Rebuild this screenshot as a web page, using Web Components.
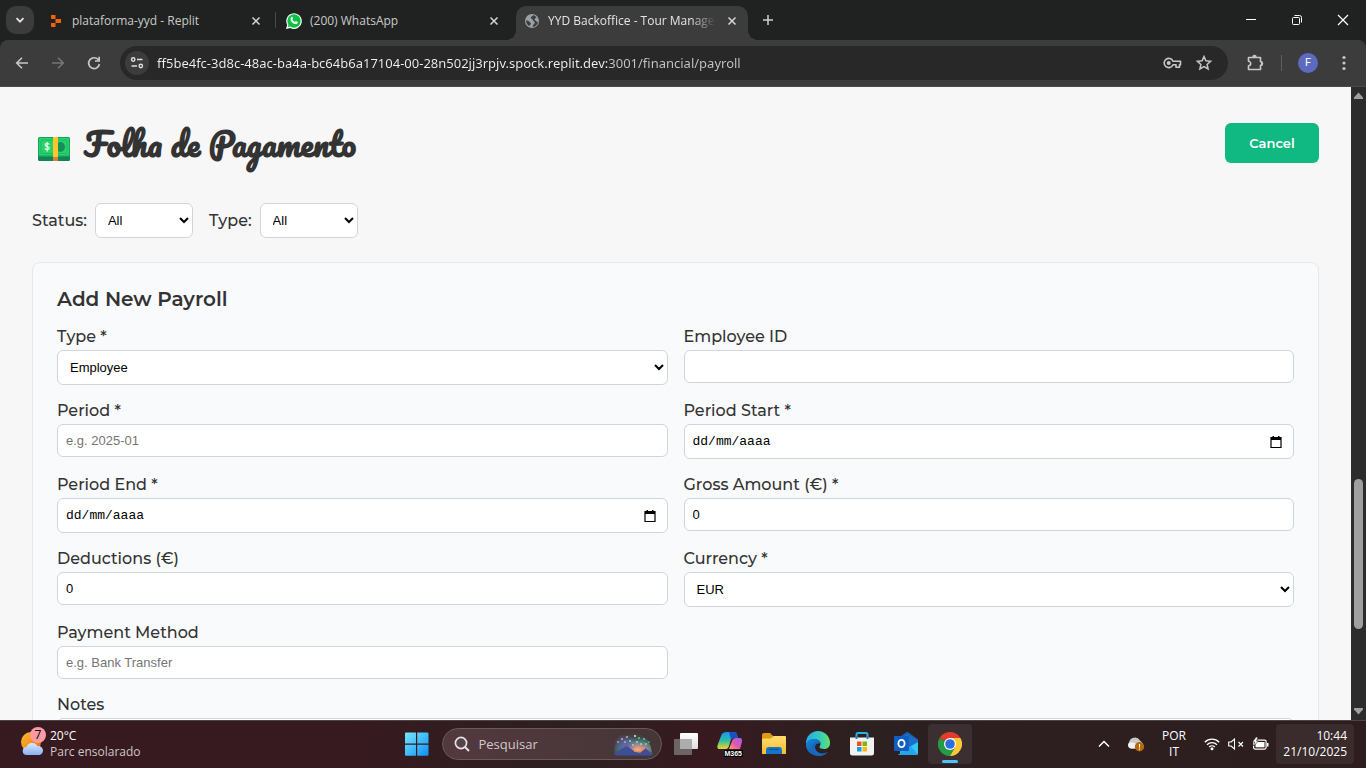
<!DOCTYPE html>
<html lang="pt">
<head>
<meta charset="utf-8">
<title>YYD Backoffice - Tour Management</title>
<style>
  :root {
    --ui-font: "Segoe UI", "Open Sans", sans-serif;
    --url-font: "Segoe UI", "Noto Sans", sans-serif;
    --page-font: Montserrat, Inter, sans-serif;
    --control-font: Arial, "Liberation Sans", sans-serif;
    --ink: #333333;
    --line: #d1d5db;
    --chrome: #3c3c3c;
  }
  html, body { margin: 0; height: 100%; overflow: hidden; }
</style>
</head>
<body>
<desktop-screen></desktop-screen>

<script>
const ICONS = {
  chevronDown: [14, 14, '<path d="M3.500 5.200 7 8.700l3.500-3.500" fill="none" stroke="#e3e3e3" stroke-width="1.800"/>'],
  chevronUp: [14, 14, '<path d="M2 9.500 7 4.500l5 5" fill="none" stroke="#fff" stroke-width="1.500"/>'],
  replit: [14, 14, '<g fill="#f26207"><path d="M2 1h4.500v4H2.500A1 1 0 0 1 2 4zM6.500 5H12v4H6.500zM2 9h4.500v4H2.500A1 1 0 0 1 2 12z"/></g>'],
  whatsapp: [16, 16, '<path d="M0 16l1.200-4.100A7.800 7.800 0 1 1 4.200 14.900z" fill="#fff"/><circle cx="8" cy="8" r="6.700" fill="#0cc143"/><path d="M1.700 14.300l1-3 2 2z" fill="#0cc143"/><path d="M5.200 4.200c.7-.6 1.100-.4 1.300 0l.6 1.400-.7 1c.6 1.200 1.400 1.900 2.600 2.500l.9-1 1.600.8c.5.3.2 1-.2 1.500-1.600 1.500-4.200.1-5.600-1.500C4.400 7.400 4 5.400 5.200 4.200z" fill="#fff"/>'],
  globe: [14, 14, '<circle cx="7" cy="7" r="7" fill="#9aa0a6"/><path d="M8.500 1c-.2 1.500-2.500 1-2.700 2.500C5.600 5 7.700 4.600 8 6.200c.2 1.300 1.800 1 1.800 2.400S8 10.500 7.500 13c3-.2 5-2.200 5.400-5-1.700.2-1.500-1.300-2.800-1.800-1-.4-.8-1.600.3-2 .5-.2 1-.5 1-.9A6 6 0 0 0 8.500 1zM1 6.500c1.200 0 3 .3 3.400 1.300.3.900 1.700.8 1.500 1.900-.2 1-1.500 1.200-1.400 2.600C2.500 11.300 1.200 9 1 6.500z" fill="#3c3c3c"/>'],
  x: [12, 12, '<path d="M2.500 2.500l7 7m0-7l-7 7" stroke="#d5d5d5" stroke-width="1.500"/>'],
  plus: [12, 12, '<path d="M6 1v10M1 6h10" stroke="#d0d0d0" stroke-width="1.500"/>'],
  minimize: [12, 12, '<path d="M1 5.500h10" stroke="#fff"/>'],
  restore: [12, 12, '<rect x="1.500" y="3.500" width="7" height="7" rx="1" fill="none" stroke="#fff"/><path d="M3.500 1.500h5a2 2 0 0 1 2 2v5" fill="none" stroke="#fff"/>'],
  close: [12, 12, '<path d="M1 1l10 10M11 1L1 11" stroke="#fff" stroke-width="1.200"/>'],
  back: [16, 16, '<path d="M14 8H3M8 2.700L2.700 8 8 13.300" fill="none" stroke="#c7c7c7" stroke-width="1.600"/>'],
  forward: [16, 16, '<path d="M2 8h11M8 2.700L13.300 8 8 13.300" fill="none" stroke="#757575" stroke-width="1.600"/>'],
  reload: [16, 16, '<path d="M12.600 5.200A5.400 5.400 0 1 0 13.400 9" fill="none" stroke="#c7c7c7" stroke-width="1.700"/><path d="M14 1.800v5H9V5.200h3.300V1.800z" fill="#c7c7c7"/>'],
  tune: [16, 16, '<g fill="none" stroke="#dedede" stroke-width="1.400"><circle cx="4.200" cy="4.500" r="1.700"/><path d="M8 4.500h5.500M2.500 11h5.500"/><circle cx="11.800" cy="11" r="1.700"/></g>'],
  key: [20, 20, '<path d="M11 8.200A4.600 4.600 0 1 0 11 11.800h3v2.400h3.500V11.800h1V8.200z" fill="none" stroke="#c7c7c7" stroke-width="1.600" stroke-linejoin="round"/><circle cx="6.700" cy="10" r="2" fill="#c7c7c7"/>'],
  star: [18, 18, '<path d="M9 2.600l1.900 4.200 4.700.5-3.500 3.100 1 4.600L9 12.600 4.900 15l1-4.600-3.500-3.100 4.700-.5z" fill="none" stroke="#c7c7c7" stroke-width="1.500"/>'],
  puzzle: [18, 18, '<path d="M2.500 3.500h12v4.200a1.800 1.800 0 0 1 0 3.600v4.200h-12v-3.800a2.200 2.200 0 0 0 0-4.400z" fill="none" stroke="#c7c7c7" stroke-width="1.600" stroke-linejoin="round"/><path d="M6.300 3a2.200 2.200 0 0 1 4.400 0zM15 7.300a2.200 2.200 0 0 1 0 4.400z" fill="#c7c7c7"/>'],
  dots: [16, 16, '<g fill="#c7c7c7"><circle cx="8" cy="2.500" r="1.600"/><circle cx="8" cy="8" r="1.600"/><circle cx="8" cy="13.500" r="1.600"/></g>'],
  money: [32, 30, '<rect y="8" width="32" height="20" rx="1.500" fill="#138353"/><rect y="4" width="32" height="20" rx="1.500" fill="#1a9e60"/><rect x="1" y="5" width="30" height="17.500" rx="1" fill="#27d36b"/><rect x="3" y="7" width="26" height="13.500" rx="1" fill="none" stroke="#20b862"/><ellipse cx="22.500" cy="14" rx="4.500" ry="5" fill="#168f56"/><rect x="15" y="4" width="5" height="20" fill="#ffc62b"/><rect x="15" y="24" width="5" height="4" fill="#d5833a"/><path d="M11.200 11.500c-.6-1.300-3.600-1.500-4 0-.3 2.800 4.300 1.500 4 4-.3 1.700-3.500 1.500-4.200 0M9.200 9v9.500" fill="none" stroke="#dffbe8" stroke-width="1.300"/>'],
  calendar: [12, 12, '<path d="M1 1.500h10V11.500H1z" fill="none" stroke="#000" stroke-width="1.200"/><path d="M1 1.500h10v2.500H1zM2.500 0h1.500v2H2.500zM8 0h1.500v2H8z"/>'],
  weather: [26, 30, '<defs><linearGradient id="s" x1="0" y1="0" x2="1" y2="1"><stop stop-color="#f9c02c"/><stop offset="1" stop-color="#f0690f"/></linearGradient><linearGradient id="c" x1="0" y1="0" x2="0" y2="1"><stop stop-color="#dbe8ff"/><stop offset="1" stop-color="#86b1f3"/></linearGradient></defs><circle cx="11" cy="13" r="10" fill="url(#s)"/><path d="M7 26a4 4 0 0 1-.5-8 6 6 0 0 1 11-.8 4.500 4.500 0 0 1 2 8.800z" fill="url(#c)"/>'],
  windows: [24, 24, '<defs><linearGradient id="w" x1="0" y1="0" x2="1" y2="1" ><stop stop-color="#77e8fd"/><stop offset="1" stop-color="#0d90f5"/></linearGradient></defs><path d="M0 1.500A1 1 0 0 1 1 .5h10v11H0zM12.200.5H22.500a1 1 0 0 1 1 1v10H12.200zM0 12.700h11v11H1a1 1 0 0 1-1-1zM12.200 12.700h11.300v10a1 1 0 0 1-1 1H12.200z" fill="url(#w)"/>'],
  search: [16, 16, '<circle cx="7" cy="7" r="5.600" fill="#53454a" stroke="#e6e2e3" stroke-width="1.700"/><path d="M11 11l4 4" stroke="#e6e2e3" stroke-width="2"/>'],
  scenery: [40, 26, '<defs><radialGradient id="sa" cx=".6" cy=".8" r=".65"><stop stop-color="#ffb080"/><stop offset=".35" stop-color="#b08c8c"/><stop offset=".7" stop-color="#34786f"/><stop offset="1" stop-color="#34786f" stop-opacity=".1"/></radialGradient><radialGradient id="sb" cx=".5" cy=".5" r=".5"><stop stop-color="#6460a8"/><stop offset="1" stop-color="#6460a8" stop-opacity="0"/></radialGradient></defs><path d="M1 23C1 10 7 3 14 4c7-4 24-2 25 19z" fill="url(#sa)"/><ellipse cx="12" cy="14" rx="12" ry="11" fill="url(#sb)"/><path d="M1 23l7-5 6-3 7 5 6 1 5-4 8 6-2 1.500H3z" fill="#3f4f96"/><path d="M21 20l6 1 5-4" fill="none" stroke="#f08a50" stroke-width="1.500"/><g fill="#fff"><circle cx="5" cy="11" r=".7"/><circle cx="9" cy="8" r=".8"/><circle cx="14" cy="6" r=".8"/><circle cx="17" cy="10" r=".8"/><circle cx="22" cy="5" r=".9"/><circle cx="26" cy="7" r=".7"/><circle cx="24" cy="11" r=".8"/><circle cx="31" cy="8" r=".7"/><circle cx="33" cy="13" r=".7"/><circle cx="12" cy="11" r=".7"/><circle cx="20" cy="14" r=".7"/><circle cx="28" cy="13" r=".7"/><circle cx="36" cy="11" r=".6"/></g>'],
  taskview: [24, 24, '<defs><linearGradient id="t" x1="0" y1="0" x2="0" y2="1"><stop stop-color="#fff"/><stop offset="1" stop-color="#dedede"/></linearGradient></defs><rect x="6" y="1" width="18" height="16" rx="1" fill="url(#t)"/><rect y="7" width="18" height="16" rx="1" fill="#6a6666"/><path d="M6 7h12v10H6z" fill="#adadad"/>'],
  copilot: [26, 26, '<defs><linearGradient id="ca" x1="0" y1="0" x2="0" y2="1"><stop stop-color="#1a94f5"/><stop offset=".5" stop-color="#2bbfa3"/><stop offset="1" stop-color="#f2d528"/></linearGradient><linearGradient id="cb" x1="1" y1="0" x2="0" y2="1"><stop stop-color="#a45cf0"/><stop offset=".55" stop-color="#e058a8"/><stop offset="1" stop-color="#ffa066"/></linearGradient></defs><path d="M10 1h7c2 0 2.500 1 3 3l1 3h-4c-2 0-3 1-3.500 3l-1.500 5c-.5 2-1.500 3-3.500 3H3c-3 0-3-2-2.200-4.500L4 5c.9-3 3-4 6-4z" fill="url(#ca)"/><path d="M12 1h5c2 0 2.500 1 3 3l1 3h-4c-1.500 0-2.500.5-3 1.500z" fill="#1b4fc4"/><path d="M19 7h3.500c2.500 0 3 2 2.300 4.500L23 18H12l3-8c.8-2 2-3 4-3z" fill="url(#cb)"/>'],
  folder: [26, 26, '<defs><linearGradient id="f" x1="0" y1="0" x2="0" y2="1"><stop stop-color="#ffdc70"/><stop offset="1" stop-color="#f7bc2e"/></linearGradient></defs><path d="M1 4a2 2 0 0 1 2-2h6l3 3v4H1z" fill="#dd9b10"/><path d="M1 9c0-1 .5-1.500 1.500-1.500H10L12.500 5H24a1 1 0 0 1 1 1v17H1z" fill="url(#f)"/><path d="M5 23v-4a3 3 0 0 1 3-3h10a3 3 0 0 1 3 3v4z" fill="#1476c8"/><path d="M8 18.500h10" stroke="#0c579c" stroke-width="1.200"/>'],
  edge: [26, 26, '<defs><linearGradient id="ea" x1="0" y1=".4" x2="1" y2=".4"><stop stop-color="#27a9e8"/><stop offset=".6" stop-color="#35cdb8"/><stop offset="1" stop-color="#67e06b"/></linearGradient><linearGradient id="eb" x1="0" y1="0" x2="1" y2="1"><stop stop-color="#1487d8"/><stop offset="1" stop-color="#0c4ba0"/></linearGradient></defs><path d="M1 12A12 12 0 0 1 25 12c0 4-2.700 6-6 6-3 0-4.500-1-4.500-2 0-.8 1-1.400 1-3.200 0-2.300-2.200-4.300-5.500-4.300C5.500 8.500 1 11 1 15z" fill="url(#ea)"/><path d="M1 13c.5-3 4-5 8-5 3.700 0 6.300 2 6.500 4.500-1-1-5.500-.8-5.500 3.500s4 6.800 8 6.500c2-.1 3.700-1 5-1.800C20.500 24 17 25 13.500 25 6.500 25 .5 20 1 13z" fill="url(#eb)"/><path d="M10 16c0 4.500 4 6.800 8 6.500 1.500-.1 3-.6 4.200-1.200-1.200 2-5 3.700-8.700 3.700C9 25 6.500 21 6.500 17.500c0-3 2-5.800 4.500-6.500 1.800 0 3 .5 3.500 1.500-2-.5-4.500.5-4.500 3.500z" fill="#1b66bd"/>'],
  store: [26, 26, '<path d="M7.500 8V3.500A1.500 1.500 0 0 1 9 2h8a1.500 1.500 0 0 1 1.500 1.500V8" fill="none" stroke="#27b0ea" stroke-width="2"/><path d="M1 6.500h24V22a2.500 2.500 0 0 1-2.500 2.500h-19A2.500 2.500 0 0 1 1 22z" fill="#f2f2f2"/><path d="M6.500 5h2v3h-2zM17.500 5h2v3h-2z" fill="#1684bd"/><path d="M8 10.500h4.500V15H8z" fill="#f25022"/><path d="M13.500 10.500H18V15h-4.500z" fill="#7fba00"/><path d="M8 16h4.500v4.500H8z" fill="#00a4ef"/><path d="M13.500 16H18v4.500h-4.500z" fill="#ffb900"/>'],
  outlook: [26, 26, '<path d="M4 8l9-6.500a2 2 0 0 1 2.500 0L25 8.500V12H4z" fill="#1465b8"/><path d="M7 6l8 0 10 5v11a2 2 0 0 1-2 2H7z" fill="#38a9ee"/><path d="M13 3l12 6v4l-10 5-4-9z" fill="#1b6fc8"/><path d="M25 11v11a2 2 0 0 1-2 2H5l13-9z" fill="#35c5f2"/><path d="M5 24l13-8.500 6.500 7.700-1.500.8z" fill="#22a6ea"/><rect x="1" y="5" width="15" height="15" rx="1" fill="#0f5fc0"/><ellipse cx="8.500" cy="12.500" rx="3.100" ry="3.600" fill="none" stroke="#fff" stroke-width="1.800"/>'],
  chrome: [24, 24, '<path d="M12 12L1.600 6A12 12 0 0 1 22.400 6z" fill="#e33b2e"/><path d="M1.600 6A12 12 0 0 0 12 24l5.200-9-5.200-3z" fill="#259b45"/><path d="M22.400 6A12 12 0 0 1 12 24l5.200-9L12 6z" fill="#fcc934"/><circle cx="12" cy="12" r="6" fill="#fff"/><circle cx="12" cy="12" r="4.800" fill="#2a6ee0"/>'],
  onedrive: [18, 16, '<path d="M4 12.500A3.500 3.500 0 0 1 2 6.500 6 6 0 0 1 13 4.500l3 3-4 5z" fill="#c9c9c9"/><path d="M2 7c4-2 7 0 11 5.500H4A3.500 3.500 0 0 1 2 7z" fill="#f1f1f1"/><circle cx="12.500" cy="10.800" r="4.700" fill="#b66a06"/><path d="M12.500 8v3.500M12.500 12.500v1.300" stroke="#fff" stroke-width="1.100"/>'],
  wifi: [16, 14, '<g fill="none" stroke="#fff" stroke-width="1.300"><path d="M.8 5.200a10.200 10.200 0 0 1 14.400 0M3 7.700a7 7 0 0 1 10 0M5.200 10a4 4 0 0 1 5.600 0"/></g><circle cx="8" cy="11.800" r="1.500" fill="#fff"/>'],
  mute: [16, 14, '<path d="M.7 5v4h2.500l3.300 3V2L3.200 5z" fill="none" stroke="#fff" stroke-width="1.100"/><path d="M10.500 5l4.500 4.500m0-4.500l-4.500 4.500" stroke="#fff" stroke-width="1.100"/>'],
  battery: [17, 14, '<rect x="1.600" y="3.100" width="12.500" height="9" rx="1.500" fill="none" stroke="#fff" stroke-width="1.200"/><rect x="3.500" y="5" width="9" height="5.300" fill="#fff"/><path d="M15 6h1.500v3.500H15z" fill="#fff"/><path d="M4 0L.5 5h2L1.500 9 6.500 4H4.500L6 0z" fill="#fff" stroke="#2d1d1f" stroke-width=".6"/>'],
  up: [9, 7, '<path d="M4.500.5L9 5.500a1 1 0 0 1-.8 1.500H.8A1 1 0 0 1 0 5.500z" fill="#9f9f9f"/>'],
  down: [9, 7, '<path d="M4.500 6.500L9 1.500A1 1 0 0 0 8.200 0H.8A1 1 0 0 0 0 1.500z" fill="#9f9f9f"/>']
};

function define(name, template) {
  customElements.define(name, class extends HTMLElement {
    connectedCallback() {
      if (this.shadowRoot) return;
      const root = this.attachShadow({ mode: 'open' });
      root.innerHTML = typeof template === 'function' ? template(this) : template;
    }
  });
}
const attr = (el, name, fallback = '') => el.hasAttribute(name) ? el.getAttribute(name) : fallback;

define('ui-icon', el => {
  const [w, h, body] = ICONS[attr(el, 'name')];
  return `<style>:host{display:block;flex:none}svg{display:block}</style>
  <svg width="${w}" height="${h}" viewBox="0 0 ${w} ${h}" aria-hidden="true">${body}</svg>`;
});

define('icon-button', el => `<style>
  :host{display:block;flex:none;width:36px;height:34px}
  button{display:grid;place-items:center;width:100%;height:100%;padding:0;border:0;background:var(--fill,none);border-radius:var(--round,0);color:inherit;font:inherit}
</style><button aria-label="${attr(el, 'label')}"><slot>${el.hasAttribute('icon') ? `<ui-icon name="${attr(el, 'icon')}"></ui-icon>` : ''}</slot></button>`);

/* Browser window */
define('browser-tab', el => `<style>
  :host{display:flex;align-items:center;position:relative;box-sizing:border-box;flex:0 1 auto;width:232px;min-width:0;height:34px;margin-top:6px;padding:0 8px 5px;gap:8px;color:#c9cac9;font:12px/28px var(--ui-font)}
  .icon{display:grid;place-items:center;width:16px;height:28px;flex:none}
  .title{flex:1;min-width:0;height:28px;overflow:hidden;white-space:nowrap}
  :host([active]){background:var(--chrome);border-radius:10px 10px 0 0;color:#e3e3e3}
  :host([active]) .title{mask-image:linear-gradient(90deg,#000 85%,transparent)}
  :host([active])::before,:host([active])::after{content:"";position:absolute;bottom:0;width:10px;height:10px}
  :host([active])::before{left:-10px;background:radial-gradient(circle at 0 0,transparent 10px,var(--chrome) 10px)}
  :host([active])::after{right:-10px;background:radial-gradient(circle at 100% 0,transparent 10px,var(--chrome) 10px)}
  icon-button{width:16px;height:16px}
</style>
<span class="icon"><ui-icon name="${attr(el, 'icon')}"></ui-icon></span>
<span class="title"><slot></slot></span>
<icon-button icon="x" label="Fechar"></icon-button>`);

define('tab-strip', `<style>
  :host{display:flex;height:40px;gap:6px;padding-left:6px;background:#202221}
  .list{--fill:#3c3c3c;--round:10px;width:28px;height:28px;margin-top:6px}
  .tabs{display:flex;gap:6px;min-width:0;flex:0 1 auto}
  .sep::after{content:"";position:absolute;left:-3px;top:6px;width:1px;height:16px;background:#4a4b4a}
  .new{width:28px;height:28px;margin-top:6px}
  .window{display:flex;margin-left:auto}
  .window icon-button{width:46px;height:40px}
</style>
<icon-button class="list" icon="chevronDown" label="Pesquisar guias"></icon-button>
<div class="tabs">
  <browser-tab icon="replit">plataforma-yyd - Replit</browser-tab>
  <browser-tab class="sep" icon="whatsapp">(200) WhatsApp</browser-tab>
  <browser-tab active icon="globe">YYD Backoffice - Tour Management</browser-tab>
</div>
<icon-button class="new" icon="plus" label="Nova guia"></icon-button>
<div class="window">
  <icon-button icon="minimize" label="Minimizar"></icon-button>
  <icon-button icon="restore" label="Restaurar"></icon-button>
  <icon-button icon="close" label="Fechar janela"></icon-button>
</div>`);

define('address-bar', `<style>
  :host{display:block;background:#202221}
  .bar{display:flex;align-items:center;box-sizing:border-box;height:47px;padding:0 4px;border-radius:8px 8px 0 0;background:var(--chrome);border-bottom:1px solid #4b4b4b}
  .pill{display:flex;align-items:center;flex:1;min-width:0;height:34px;margin:0 9px 0 8px;padding:0 8px 0 5px;box-sizing:border-box;border-radius:17px;background:#282828}
  .site{--fill:#3c3c3c;--round:50%;width:24px;height:24px}
  input{flex:1;min-width:0;padding:0 0 0 8px;border:0;outline:0;height:26px;font:13px/26px var(--url-font);color:#e3e3e3;
    background:linear-gradient(90deg,#f0f0f0 459px,#c4c7c5 459px);background-clip:text;-webkit-background-clip:text;-webkit-text-fill-color:transparent}
  .pill .end{width:32px}
  .rule{width:1px;height:16px;margin:0 16px 0 8px;background:#5f6060}
  .avatar{--fill:#5c6bc0;--round:50%;width:20px;height:20px;margin-right:8px;color:#fff;font:11px/20px Roboto,sans-serif}
</style>
<div class="bar">
<icon-button icon="back" label="Voltar"></icon-button>
<icon-button icon="forward" label="Avançar"></icon-button>
<icon-button icon="reload" label="Atualizar"></icon-button>
<div class="pill">
  <icon-button class="site" icon="tune" label="Informações do site"></icon-button>
  <input aria-label="Barra de endereço" spellcheck="false" value="ff5be4fc-3d8c-48ac-ba4a-bc64b6a17104-00-28n502jj3rpjv.spock.replit.dev:3001/financial/payroll">
  <icon-button class="end" icon="key" label="Senhas"></icon-button>
  <icon-button class="end" icon="star" label="Favoritos"></icon-button>
</div>
<icon-button icon="puzzle" label="Extensões"></icon-button>
<span class="rule"></span>
<icon-button class="avatar" label="Perfil">F</icon-button>
<icon-button icon="dots" label="Menu"></icon-button>
</div>`);

define('scroll-bar', `<style>
  :host{display:grid;grid-template-rows:17px 375fr 150fr 74fr 17px;justify-items:center;align-items:center;width:15px;flex:none;background:#2c2c2c}
  .thumb{grid-row:3;width:9px;height:100%;border-radius:5px;background:#9f9f9f}
  .down{grid-row:5}
</style><ui-icon name="up"></ui-icon><span class="thumb"></span><ui-icon class="down" name="down"></ui-icon>`);

/* Payroll page */
const controlStyle = `
  label{color:var(--ink);font:500 16px/19px var(--page-font);white-space:nowrap}
  input,select,textarea{box-sizing:border-box;width:100%;height:33px;margin:0;padding:8px;border:1px solid var(--line);border-radius:6px;background-color:#fff;color:#000;font:13px/15px var(--control-font);outline:0}
  select{height:35px}
  input::placeholder{color:#757575}`;

const optionsOf = el => attr(el, 'options').split('|').map(o => `<option>${o}</option>`).join('');

define('filter-select', el => `<style>${controlStyle}
  :host{display:flex;align-items:center;gap:8px}
  select{width:98px}
</style><label for="control">${attr(el, 'label')}</label><select id="control">${optionsOf(el)}</select>`);

define('form-field', el => {
  const kind = attr(el, 'kind', 'text');
  const control = {
    text: () => `<input id="control" placeholder="${attr(el, 'placeholder')}">`,
    number: () => `<input id="control" type="number" value="0">`,
    select: () => `<select id="control">${optionsOf(el)}</select>`,
    date: () => `<div class="date"><input id="control" placeholder="dd/mm/aaaa"><icon-button icon="calendar" label="Abrir calendário"></icon-button></div>`,
    textarea: () => `<textarea id="control"></textarea>`
  }[kind]();
  return `<style>${controlStyle}
    :host{display:flex;flex-direction:column;gap:4px;min-width:0}
    :host([kind=textarea]){grid-column:1/-1}
    textarea{height:80px}
    .date{display:flex;align-items:center;height:35px;box-sizing:border-box;border:1px solid var(--line);border-radius:6px;background:#fff}
    .date input{flex:1;min-width:0;border:0;height:31px;background:none;font-family:"Liberation Mono",monospace}
    .date input::placeholder{color:#000}
    .date icon-button{width:34px;height:33px}
  </style><label for="control">${attr(el, 'label')}</label>${control}`;
});

define('primary-button', `<style>
  :host{display:block;flex:none}
  button{min-width:94px;height:40px;padding:0 23px;border:0;border-radius:6px;background:#10b981;color:#fff;font:600 13px/16px var(--page-font)}
</style><button><slot></slot></button>`);

define('page-header', `<style>
  :host{display:flex;align-items:center;justify-content:space-between;height:40px}
  h1{display:flex;align-items:flex-end;gap:14px;margin:0;padding-left:6px;color:var(--ink);font:700 32px/40px Pacifico,Lato,sans-serif;white-space:nowrap}
</style><h1><ui-icon name="money"></ui-icon><slot></slot></h1><slot name="action"></slot>`);

define('form-card', `<style>
  :host{display:block;padding:24px;border:1px solid #e5e7eb;border-radius:8px;background:#f9fafb}
  h2{margin:0 0 16px;color:var(--ink);font:600 20px/24px var(--page-font)}
  form{display:grid;grid-template-columns:repeat(2,minmax(0,1fr));gap:16px}
</style><h2>Add New Payroll</h2>
<form>
  <form-field kind="select" label="Type *" options="Employee|Freelancer"></form-field>
  <form-field label="Employee ID"></form-field>
  <form-field label="Period *" placeholder="e.g. 2025-01"></form-field>
  <form-field kind="date" label="Period Start *"></form-field>
  <form-field kind="date" label="Period End *"></form-field>
  <form-field kind="number" label="Gross Amount (€) *"></form-field>
  <form-field kind="number" label="Deductions (€)"></form-field>
  <form-field kind="select" label="Currency *" options="EUR|USD"></form-field>
  <form-field label="Payment Method" placeholder="e.g. Bank Transfer"></form-field>
  <form-field kind="textarea" label="Notes"></form-field>
</form>`);

define('payroll-page', `<style>
  :host{display:block;flex:1;min-width:0;overflow:hidden;background:#f7f7f7}
  main{padding:36px 32px}
  .filters{display:flex;gap:16px;margin:40px 0 24px}
</style>
<main>
  <page-header>Folha de Pagamento<primary-button slot="action">Cancel</primary-button></page-header>
  <div class="filters">
    <filter-select label="Status:" options="All|Pending|Paid"></filter-select>
    <filter-select label="Type:" options="All|Employee"></filter-select>
  </div>
  <form-card></form-card>
</main>`);

/* Taskbar */
define('weather-widget', `<style>
  :host{display:flex;align-items:center;gap:4px;font:12px/16px var(--ui-font);color:#fff;white-space:nowrap}
  .art{position:relative}
  .badge{position:absolute;top:-2px;right:0;width:16px;height:16px;border-radius:50%;background:#ff99a4;color:#000;text-align:center}
  .text span{display:block}
  .text span+span{color:#cfc7c9}
</style><div class="art"><ui-icon name="weather"></ui-icon><span class="badge">7</span></div>
<div class="text"><span>20°C</span><span>Parc ensolarado</span></div>`);

define('search-box', `<style>
  :host{display:flex;align-items:center;box-sizing:border-box;width:220px;height:32px;margin:0 2px 0 3px;padding:0 8px 0 11px;gap:8px;border:1px solid #675a5d;border-radius:16px;background:linear-gradient(90deg,#53393e,#453637)}
  input{flex:1;min-width:0;padding:0 0 0 1px;border:0;background:none;outline:0;font:13px/20px var(--ui-font);color:#d8d2d3}
  input::placeholder{color:#d0c9ca}
</style><ui-icon name="search"></ui-icon><input aria-label="Pesquisar" placeholder="Pesquisar"><ui-icon name="scenery"></ui-icon>`);

define('task-bar', `<style>
  :host{display:flex;align-items:center;box-sizing:border-box;height:48px;padding-bottom:1px;border-top:1px solid #4d4345;background:linear-gradient(90deg,#371a1f 0,#371a1f 25%,#2d2021 42%,#371a1f 51%,#2d2021 63%,#2d1d1f 100%);color:#fff;font:12px/16px var(--ui-font)}
  .side{flex:1;display:flex;align-items:center;min-width:0}
  weather-widget{margin-left:20px}
  .apps{display:flex;align-items:center;flex:none}
  .apps icon-button{width:44px;height:40px;position:relative}
  .m{position:absolute;left:16px;bottom:7px;padding:0 1px;background:#000;color:#fff;font:700 7px/7px "Liberation Sans",sans-serif}
  .active{--fill:#3c2f31;--round:4px}
  .active::after{content:"";position:absolute;left:14px;bottom:1px;width:16px;height:3px;border-radius:2px;background:#4cc2ff}
  .end{justify-content:flex-end}
  .end icon-button{width:24px;height:40px}
  .lang{text-align:center;margin:0 14px}
  .clock{box-sizing:border-box;width:78px;height:40px;margin:0 12px 0 4px;padding:4px 7px 4px 0;border-radius:4px;background:#3a2b2d;text-align:right}
  .wide{margin-right:8px}
</style>
<div class="side"><weather-widget></weather-widget></div>
<div class="apps">
  <icon-button icon="windows" label="Iniciar"></icon-button>
  <search-box></search-box>
  <icon-button icon="taskview" label="Visão de tarefas"></icon-button>
  <icon-button label="Microsoft 365 Copilot"><ui-icon name="copilot"></ui-icon><span class="m">M365</span></icon-button>
  <icon-button icon="folder" label="Explorador"></icon-button>
  <icon-button icon="edge" label="Edge"></icon-button>
  <icon-button icon="store" label="Loja"></icon-button>
  <icon-button icon="outlook" label="Outlook"></icon-button>
  <icon-button class="active" icon="chrome" label="Chrome"></icon-button>
</div>
<div class="side end">
  <icon-button class="wide" icon="chevronUp" label="Ícones ocultos"></icon-button>
  <icon-button icon="onedrive" label="OneDrive"></icon-button>
  <div class="lang">POR<br>IT</div>
  <icon-button icon="wifi" label="Rede"></icon-button>
  <icon-button icon="mute" label="Volume"></icon-button>
  <icon-button icon="battery" label="Bateria"></icon-button>
  <div class="clock">10:44<br>21/10/2025</div>
</div>`);

define('desktop-screen', `<style>
  :host{display:flex;flex-direction:column;height:100vh;font-family:var(--ui-font)}
  tab-strip,address-bar,task-bar{flex:none}
  .view{display:flex;flex:1;min-height:0}
</style>
<tab-strip></tab-strip><address-bar></address-bar>
<div class="view"><payroll-page></payroll-page><scroll-bar></scroll-bar></div>
<task-bar></task-bar>`);
</script>
</body>
</html>
